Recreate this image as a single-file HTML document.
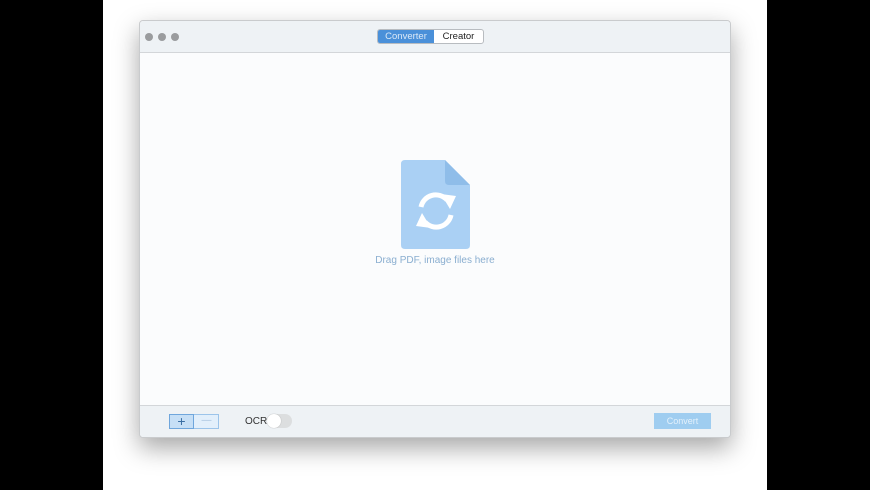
<!DOCTYPE html>
<html><head><style>
body{margin:0;width:870px;height:490px;background:#000;position:relative;overflow:hidden;font-family:"Liberation Sans",sans-serif}
.page{position:absolute;left:103px;top:0;width:664px;height:490px;background:#fff}
.win{position:absolute;left:139px;top:20px;width:592px;height:418px;background:#fbfcfd;border:1px solid #c9cbcd;box-sizing:border-box;border-radius:4px;box-shadow:0 10px 25px rgba(0,0,0,.35);overflow:hidden}
.tb{position:absolute;left:0;top:0;right:0;height:31px;background:#eef2f5;border-bottom:1px solid #d3d6d9}
.dot{position:absolute;top:12px;width:8px;height:8px;border-radius:50%;background:#9a9c9e}
.seg{position:absolute;left:237px;top:8px;width:105px;height:13px;border:1px solid #b8bcc0;border-radius:3px;background:#fff;font-size:9.5px;line-height:13px;overflow:hidden}
.seg .a{position:absolute;left:0;top:0;width:56px;height:13px;background:#4a90d9;color:#dbe9f7;text-align:center}
.seg .b{position:absolute;left:56px;top:0;width:49px;text-align:center;color:#222}
.bb{position:absolute;left:0;bottom:0;right:0;height:31px;background:#eef2f5;border-top:1px solid #d3d6d9}
</style></head><body>
<div class="page"></div>
<div class="win">
 <div class="tb">
  <div class="dot" style="left:5px"></div><div class="dot" style="left:18px"></div><div class="dot" style="left:31px"></div>
  <div class="seg"><div class="a">Converter</div><div class="b">Creator</div></div>
 </div>
 <svg style="position:absolute;left:261px;top:138px" width="70" height="92" viewBox="0 0 70 92">
  <path d="M4 1H44L69 26V86Q69 90 65 90H4Q0 90 0 86V5Q0 1 4 1Z" fill="#aad0f4"/>
  <path d="M44 1L69 26H48Q44 26 44 22Z" fill="#8fbde9"/>
  <g fill="none" stroke="#fff" stroke-width="5">
   <path d="M20 48A15 15 0 0 1 46 41"/><path d="M50 56A15 15 0 0 1 24 63"/>
  </g>
  <path d="M40 35L55 37L49 50Z" fill="#fff"/><path d="M30 69L15 67L21 54Z" fill="#fff"/>
 </svg>
 <div style="position:absolute;left:0;right:0;top:234px;text-align:center;font-size:10px;color:#8aaed0">Drag PDF, image files here</div>
 <div class="bb">
  <div style="position:absolute;left:29px;top:8px;width:50px;height:15px;border:1px solid #9cc4ea;background:#e2effb;box-sizing:border-box"></div>
  <div style="position:absolute;left:29px;top:8px;width:25px;height:15px;border:1px solid #6fa6dc;background:#c6dff6;box-sizing:border-box;text-align:center;font-size:14px;line-height:12px;color:#3a6ea3">+</div>
  <div style="position:absolute;left:54px;top:8px;width:25px;height:15px;text-align:center;font-size:10px;line-height:14px;color:#a9c4de">—</div>
  <div style="position:absolute;left:105px;top:10px;font-size:10px;color:#333">OCR</div>
  <div style="position:absolute;left:127px;top:8px;width:25px;height:14px;border-radius:7px;background:#dcdedf"></div>
  <div style="position:absolute;left:127px;top:8px;width:14px;height:14px;border-radius:7px;background:#fff;box-shadow:0 0 1px #999"></div>
  <div style="position:absolute;left:514px;top:7px;width:57px;height:16px;background:#9fcdf0;color:#e4f1fb;font-size:9px;line-height:16px;text-align:center">Convert</div>
 </div>
</div>
</body></html>
